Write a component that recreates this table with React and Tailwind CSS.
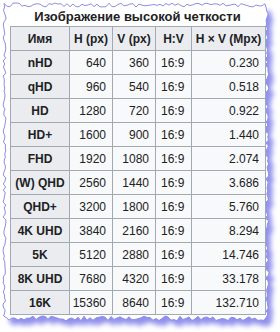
import React from "react";

function rand(seed) {
  let s = seed;
  return () => {
    s = (s * 16807) % 2147483647;
    return (s - 1) / 2147483646;
  };
}

function paperPoints() {
  const r = rand(12345);
  const pts = [];
  for (let x = 4; x <= 267; x += 3) pts.push([x, 3 + r() * 4]);
  for (let y = 8; y <= 316; y += 3) pts.push([265 + r() * 4, y]);
  for (let x = 267; x >= 4; x -= 3) pts.push([x, 316 + r() * 5]);
  for (let y = 316; y >= 6; y -= 3) pts.push([3 + r() * 3, y]);
  return pts.map((p) => p[0].toFixed(1) + "," + p[1].toFixed(1)).join(" ");
}

const rows = [
  ["nHD", "640", "360", "16:9", "0.230"],
  ["qHD", "960", "540", "16:9", "0.518"],
  ["HD", "1280", "720", "16:9", "0.922"],
  ["HD+", "1600", "900", "16:9", "1.440"],
  ["FHD", "1920", "1080", "16:9", "2.074"],
  ["(W) QHD", "2560", "1440", "16:9", "3.686"],
  ["QHD+", "3200", "1800", "16:9", "5.760"],
  ["4K UHD", "3840", "2160", "16:9", "8.294"],
  ["5K", "5120", "2880", "16:9", "14.746"],
  ["8K UHD", "7680", "4320", "16:9", "33.178"],
  ["16K", "15360", "8640", "16:9", "132.710"],
];

const th = "border border-[#a2a9b1] bg-[#eaecf0] font-bold p-0 text-center whitespace-nowrap";
const tdR = "border border-[#a2a9b1] py-0 pl-0 pr-[6px] text-right";
const tdL = "border border-[#a2a9b1] py-0 pr-0 pl-[5px] text-left";

export default function App() {
  const pts = paperPoints();
  return (
    <div
      className="relative w-[280px] h-[332px] bg-white overflow-hidden"
      style={{ fontFamily: '"Liberation Sans", Arial, sans-serif' }}
    >
      <svg className="absolute inset-0" width="280" height="332">
        <defs>
          <filter id="blur" x="-10%" y="-10%" width="120%" height="120%">
            <feGaussianBlur stdDeviation="2.4" />
          </filter>
        </defs>
        <polygon points={pts} fill="#7474e8" transform="translate(5,6)" filter="url(#blur)" opacity="0.8" />
        <polygon points={pts} fill="#ffffff" stroke="#8f8fe8" strokeWidth="1" />
      </svg>
      <div className="relative pl-[10px] pt-[8px]">
        <div className="w-[255px] text-center font-bold text-[13px] leading-[18px] text-[#202122]">
          Изображение высокой четкости
        </div>
        <table className="table-fixed w-[255px] border-collapse text-[12px] text-[#202122] bg-[#f8f9fa]">
          <colgroup>
            <col className="w-[59px]" />
            <col className="w-[43px]" />
            <col className="w-[43px]" />
            <col className="w-[36px]" />
            <col className="w-[74px]" />
          </colgroup>
          <thead>
            <tr className="h-[24px]">
              <th className={th}>Имя</th>
              <th className={th}>H (px)</th>
              <th className={th}>V (px)</th>
              <th className={th}>H:V</th>
              <th className={th}>H × V (Mpx)</th>
            </tr>
          </thead>
          <tbody>
            {rows.map((r) => (
              <tr key={r[0]} className="h-[24px]">
                <th className={th}>{r[0]}</th>
                <td className={tdR}>{r[1]}</td>
                <td className={tdR}>{r[2]}</td>
                <td className={tdL}>{r[3]}</td>
                <td className={tdR}>{r[4]}</td>
              </tr>
            ))}
          </tbody>
        </table>
      </div>
    </div>
  );
}
